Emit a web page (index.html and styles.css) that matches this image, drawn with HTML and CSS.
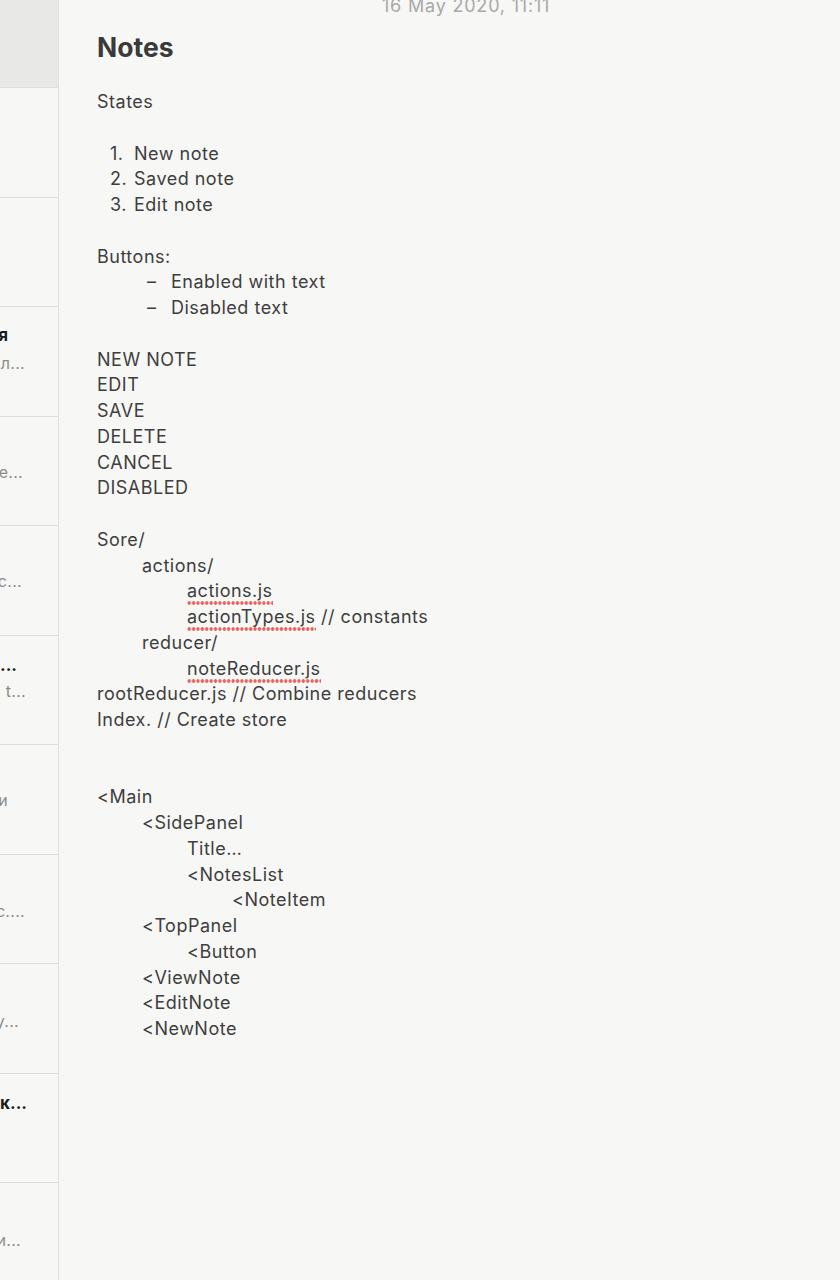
FILE: index.html
```html
<!DOCTYPE html>
<html lang="en">
<head>
<meta charset="utf-8">
<title>Notes</title>
<link rel="stylesheet" href="styles.css">
</head>
<body>
<div class="app">
  <aside class="sidebar">
    <div class="row selected"></div>
    <div class="row"></div>
    <div class="row"></div>
    <div class="row">
      <div class="line title e8">Задачи на сегодня</div>
      <div class="line preview e25">Купить продукты и молоко для пл...</div>
    </div>
    <div class="row">
      <div class="line title e8"></div>
      <div class="line preview e23 p2">Список дел на следующую неде...</div>
    </div>
    <div class="row">
      <div class="line title e8"></div>
      <div class="line preview e22 p2">Идеи для нового проекта и с...</div>
    </div>
    <div class="row">
      <div class="line title e17 t1">Идеи для статьи...</div>
      <div class="line preview e26 p1">&nbsp;&nbsp;&nbsp;t...</div>
    </div>
    <div class="row">
      <div class="line preview e8 p3">&nbsp;&nbsp;и</div>
    </div>
    <div class="row">
      <div class="line preview e25 p4">Встреча в пятницу в офис....</div>
    </div>
    <div class="row">
      <div class="line preview e19 p5">Позвонить в службу поддержку...</div>
    </div>
    <div class="row">
      <div class="line title e27 t2">Рецепт пирожк...</div>
    </div>
    <div class="row last">
      <div class="line preview e21 p6">Книги, которые стоит прочитать и...</div>
    </div>
  </aside>

  <main class="note">
    <div class="date">16 May 2020, 11:11</div>
    <h1 class="heading">Notes</h1>
    <div class="body">
      <div class="ln">States</div>
      <div class="ln blank"></div>
      <div class="ln num"><span class="marker">1.</span>New note</div>
      <div class="ln num"><span class="marker">2.</span>Saved note</div>
      <div class="ln num"><span class="marker">3.</span>Edit note</div>
      <div class="ln blank"></div>
      <div class="ln">Buttons:</div>
      <div class="ln dash"><span class="marker">–</span>Enabled with text</div>
      <div class="ln dash"><span class="marker">–</span>Disabled text</div>
      <div class="ln blank"></div>
      <div class="ln">NEW NOTE</div>
      <div class="ln">EDIT</div>
      <div class="ln">SAVE</div>
      <div class="ln">DELETE</div>
      <div class="ln">CANCEL</div>
      <div class="ln">DISABLED</div>
      <div class="ln blank"></div>
      <div class="ln">Sore/</div>
      <div class="ln i1">actions/</div>
      <div class="ln i2"><span class="spell">actions.js</span></div>
      <div class="ln i2"><span class="spell">actionTypes.js</span> // constants</div>
      <div class="ln i1">reducer/</div>
      <div class="ln i2"><span class="spell">noteReducer.js</span></div>
      <div class="ln">rootReducer.js // Combine reducers</div>
      <div class="ln">Index. // Create store</div>
      <div class="ln blank"></div>
      <div class="ln blank"></div>
      <div class="ln">&lt;Main</div>
      <div class="ln i1">&lt;SidePanel</div>
      <div class="ln i2">Title…</div>
      <div class="ln i2">&lt;NotesList</div>
      <div class="ln i3">&lt;NoteItem</div>
      <div class="ln i1">&lt;TopPanel</div>
      <div class="ln i2">&lt;Button</div>
      <div class="ln i1">&lt;ViewNote</div>
      <div class="ln i1">&lt;EditNote</div>
      <div class="ln i1">&lt;NewNote</div>
    </div>
  </main>
</div>
</body>
</html>
```

FILE: styles.css
```css
html, body {
  margin: 0;
  padding: 0;
  height: 100%;
  overflow: hidden;
  background: #f7f7f5;
}

body {
  font-family: Inter, "Noto Sans", "DejaVu Sans", sans-serif;
  color: #3e3e3e;
}

.app {
  display: flex;
  height: 1280px;
}

/* Sidebar */
.sidebar {
  width: 58px;
  flex: none;
  border-right: 1px solid #e0e0de;
  display: flex;
  flex-direction: column;
  overflow: hidden;
}

.row {
  height: 108.5px;
  flex: none;
  border-bottom: 1px solid #dededc;
  display: flex;
  flex-direction: column;
  overflow: hidden;
}

.row.selected {
  height: 87px;
  background: #e8e8e7;
}

.row.last {
  border-bottom: 0;
}

.line {
  display: flex;
  justify-content: flex-end;
  white-space: nowrap;
  overflow: hidden;
  line-height: 26px;
}

.title {
  font-weight: 700;
  font-size: 17px;
  color: #1c1c1c;
  margin-top: 15px;
}

.preview {
  font-size: 16px;
  color: #8c8c8c;
  margin-top: 2px;
  letter-spacing: 0.3px;
}

.t1 { margin-top: 16px; }
.t2 { margin-top: 16px; }
.p1 { margin-top: 0; }
.p2 { margin-top: 27px; }
.p3 { margin-top: 42px; }
.p4 { margin-top: 43px; }
.p5 { margin-top: 44px; }
.p6 { margin-top: 44px; }

.e8 { padding-right: 50px; }
.e17 { padding-right: 41px; }
.e19 { padding-right: 39px; }
.e21 { padding-right: 37px; }
.e22 { padding-right: 36px; }
.e23 { padding-right: 35px; }
.e25 { padding-right: 33px; }
.e26 { padding-right: 32px; }
.e27 { padding-right: 31px; }

/* Note */
.note {
  flex: 1;
  padding-left: 38px;
  min-width: 0;
}

.date {
  margin-top: -6px;
  padding-left: 285px;
  font-size: 18px;
  line-height: 24px;
  letter-spacing: 0.8px;
  color: #a9a9a7;
}

.heading {
  margin: 12px 0 0;
  font-size: 26.5px;
  line-height: 34px;
  font-weight: 700;
  color: #3a3a3a;
}

.body {
  margin-top: 25px;
  font-size: 18px;
  letter-spacing: 0.5px;
}

.ln {
  height: 25.75px;
  line-height: 25.75px;
  white-space: nowrap;
}

.num { padding-left: 13px; }
.num .marker { display: inline-block; width: 24px; }

.dash { padding-left: 50px; }
.dash .marker { display: inline-block; width: 24px; }

.i1 { padding-left: 45px; }
.i2 { padding-left: 90px; }
.i3 { padding-left: 135px; }

.spell {
  padding-bottom: 4px;
  background-image: radial-gradient(circle, #e8625b 1.5px, transparent 2px);
  background-size: 4.4px 4px;
  background-repeat: repeat-x;
  background-position: 0 100%;
}
```
